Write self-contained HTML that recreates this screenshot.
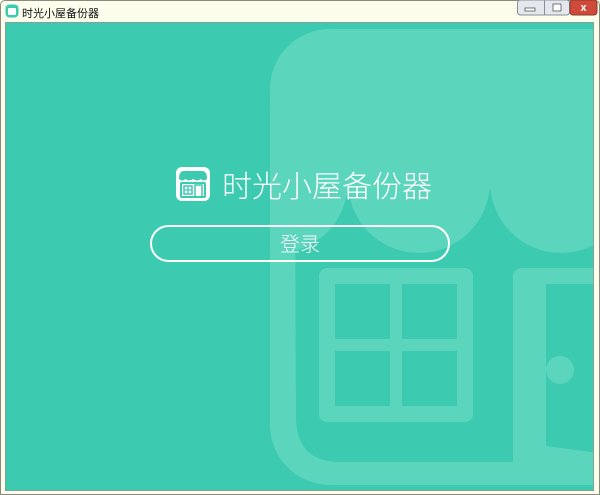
<!DOCTYPE html>
<html><head><meta charset="utf-8"><style>
html,body{margin:0;padding:0;width:600px;height:495px;overflow:hidden;background:#fdfdec;}
.frame{position:absolute;left:0;top:0;width:598px;height:493px;border:1px solid #8a8a80;border-radius:5px 5px 0 0;background:#fdfdec;}
.title{position:absolute;left:22px;top:5px;font:11px "Liberation Sans","Noto Sans CJK SC",sans-serif;color:#111;}
.content{position:absolute;left:5px;top:22px;width:589px;height:469px;background:#3ccbb0;overflow:hidden;border:1px solid #7fa39a;box-sizing:border-box;}
.h1{position:absolute;left:222px;top:164px;font:300 30px "Noto Sans CJK SC","WenQuanYi Zen Hei",sans-serif;color:#fff;line-height:40px;}
.btn{position:absolute;left:150px;top:225px;width:300px;height:37px;box-sizing:border-box;border:2.5px solid #fff;border-radius:19px;color:#fff;text-align:center;font:300 20px "Noto Sans CJK SC",sans-serif;line-height:31px;}
</style></head><body>
<div class="frame"></div>
<svg style="position:absolute;left:5px;top:4px" width="14" height="14"><rect x="0.5" y="0.5" width="13" height="13" rx="4" fill="#3ccbb0"/><rect x="3" y="4" width="8" height="7" rx="1" fill="#fff"/></svg>
<div class="title">时光小屋备份器</div>
<svg style="position:absolute;left:517px;top:0" width="81" height="16">
<rect x="0.5" y="0" width="52" height="15" rx="3" fill="#e4e8ee" stroke="#8a8f99"/>
<rect x="27" y="0" width="1" height="15" fill="#8a8f99"/>
<rect x="8" y="8" width="10" height="3" fill="#fff" stroke="#555" stroke-width="0.8"/>
<rect x="36" y="4" width="8" height="7" fill="#fff" stroke="#555" stroke-width="0.8"/>
<rect x="53" y="0" width="27" height="15" rx="3" fill="#cf4a38" stroke="#8a3a30"/>
<text x="66.5" y="11" text-anchor="middle" font-family="Liberation Sans" font-weight="bold" font-size="11" fill="#fff">x</text>
</svg>
<div class="content">
<svg width="594" height="491" style="position:absolute;left:-6px;top:-23px">
<defs><clipPath id="h"><rect x="270" y="29" width="400" height="456" rx="60"/></clipPath></defs>
<g clip-path="url(#h)">
<rect x="270" y="29" width="400" height="456" fill="#5bd5bc"/>
<path d="M295 190 L700 190 L700 462 L340 462 Q298 462 296 420 Z" fill="#3ccbb0"/>
<circle cx="277" cy="182" r="71" fill="#5bd5bc"/>
<circle cx="419" cy="182" r="71" fill="#5bd5bc"/>
<circle cx="561" cy="182" r="71" fill="#5bd5bc"/>
</g>
<rect x="319" y="268" width="154" height="154" rx="8" fill="#5bd5bc"/>
<rect x="335" y="284" width="55" height="55" fill="#3ccbb0"/>
<rect x="402" y="284" width="55" height="55" fill="#3ccbb0"/>
<rect x="335" y="351" width="55" height="55" fill="#3ccbb0"/>
<rect x="402" y="351" width="55" height="55" fill="#3ccbb0"/>
<rect x="513" y="268" width="120" height="200" rx="8" fill="#5bd5bc"/>
<path d="M546 284 L600 284 L600 453 L546 446 Z" fill="#3ccbb0"/>
<circle cx="560" cy="370" r="14" fill="#5bd5bc"/>
</svg>
</div>
<svg style="position:absolute;left:176px;top:167px" width="34" height="34">
<rect x="0" y="0" width="34" height="34" rx="6" fill="#fff"/>
<path d="M3 12 Q3 4 8 4 L26 4 Q31 4 31 12 Q28 15 24.5 12 Q21 15 17 12 Q13 15 9.5 12 Q6 15 3 12Z" fill="#3ccbb0"/>
<rect x="5" y="16" width="24" height="14" rx="1" fill="none" stroke="#3ccbb0" stroke-width="2"/>
<rect x="8" y="19" width="8" height="8" fill="none" stroke="#3ccbb0" stroke-width="1.5"/>
<line x1="12" y1="19" x2="12" y2="27" stroke="#3ccbb0" stroke-width="1.2"/>
<line x1="8" y1="23" x2="16" y2="23" stroke="#3ccbb0" stroke-width="1.2"/>
<rect x="19" y="18" width="7" height="12" fill="none" stroke="#3ccbb0" stroke-width="1.5"/>
</svg>
<div class="h1">时光小屋备份器</div>
<div class="btn">登录</div>
</body></html>
